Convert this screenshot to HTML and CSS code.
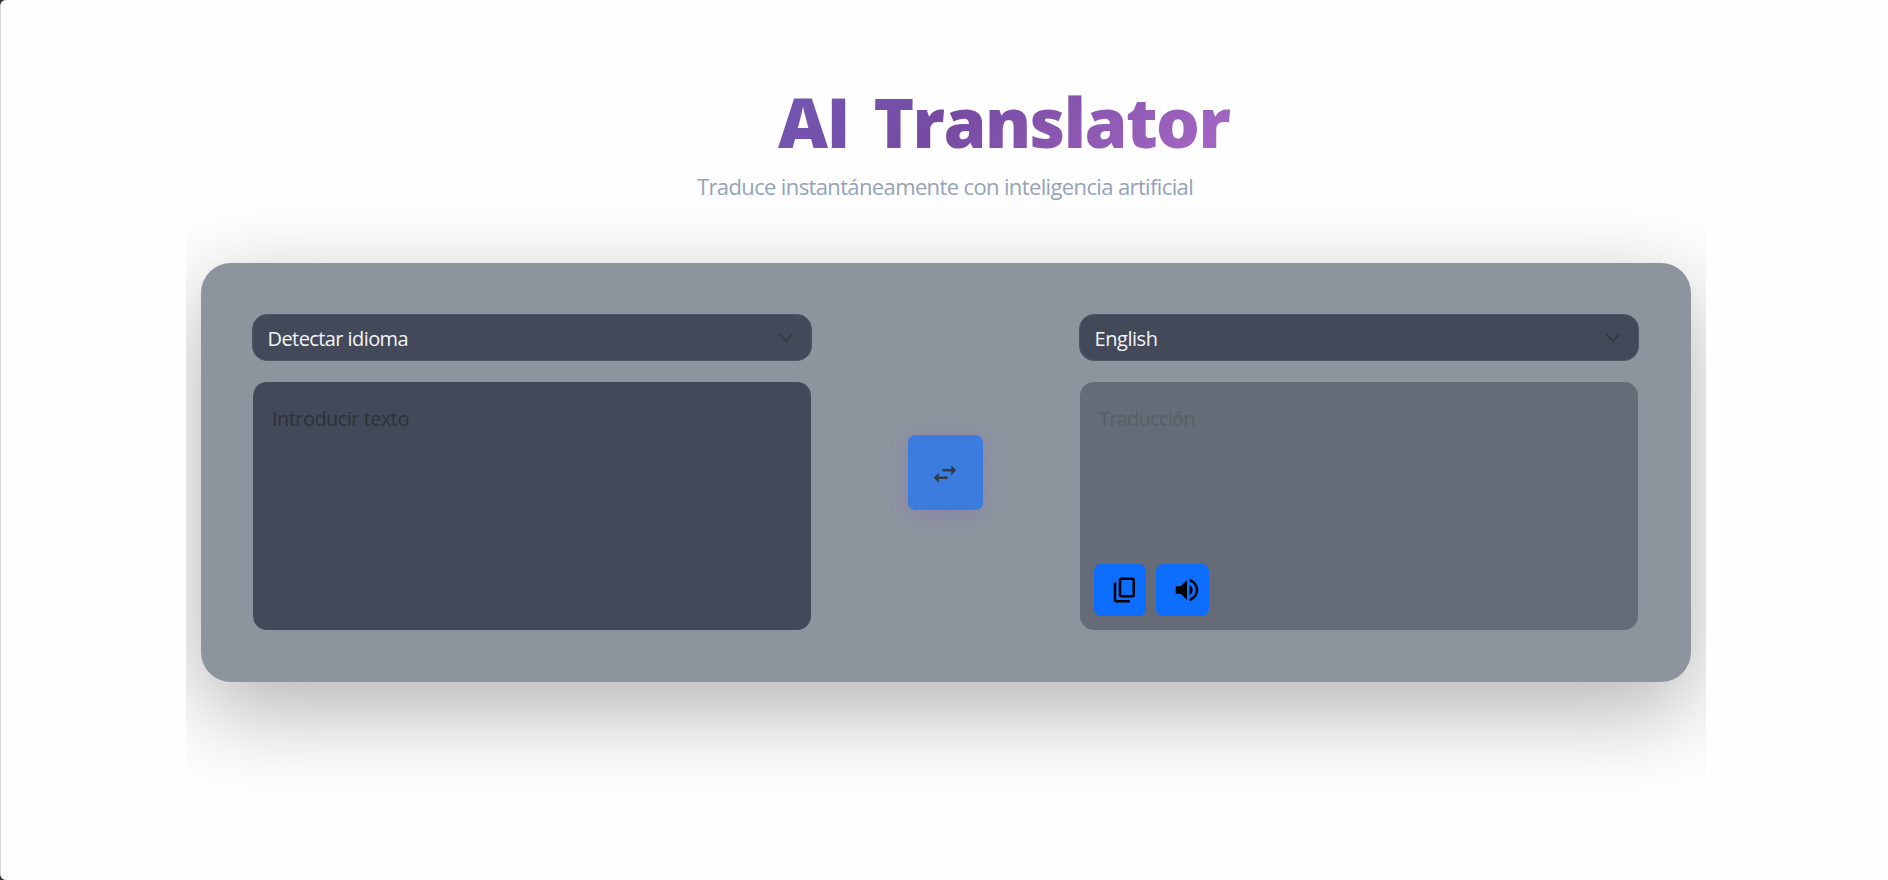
FILE: index.html
```html
<!DOCTYPE html>
<html lang="es">
<head>
<meta charset="utf-8">
<title>AI Translator</title>
<link rel="stylesheet" href="styles.css">
</head>
<body>
<main class="container">
  <header class="header">
    <h1 class="title">AI Translator</h1>
    <p class="subtitle">Traduce instantáneamente con inteligencia artificial</p>
  </header>
  <section class="card-wrap">
    <div class="card">
      <div class="panel">
        <div class="select"><span class="source-lang">Detectar idioma</span>
          <svg class="chevron" viewBox="0 0 16 16"><path d="m2 5 6 6 6-6"/></svg>
        </div>
        <div class="textarea"><span class="source-hint">Introducir texto</span></div>
      </div>
      <button class="swap" aria-label="Intercambiar">
        <svg viewBox="0 0 24 24"><path d="M6.990 11 3 15l3.990 4v-3H14v-2H6.990v-3zM21 9l-3.990-4v3H10v2h7.010v3L21 9z"/></svg>
      </button>
      <div class="panel">
        <div class="select"><span class="target-lang">English</span>
          <svg class="chevron" viewBox="0 0 16 16"><path d="m2 5 6 6 6-6"/></svg>
        </div>
        <div class="textarea output"><span class="target-hint">Traducción</span>
          <div class="actions">
            <button class="action" aria-label="Copiar"><svg viewBox="0 0 24 24"><path d="M9 18c-.55 0-1.020-.196-1.412-.587A1.926 1.926 0 0 1 7 16V4c0-.55.196-1.020.588-1.412A1.926 1.926 0 0 1 9 2h9c.55 0 1.020.196 1.413.588.391.391.587.862.587 1.412v12c0 .55-.196 1.020-.587 1.413A1.926 1.926 0 0 1 18 18H9zm0-2h9V4H9v12zm-4 6c-.55 0-1.020-.196-1.412-.587A1.926 1.926 0 0 1 3 20V6h2v14h11v2H5z"/></svg></button>
            <button class="action" aria-label="Escuchar"><svg viewBox="0 0 24 24"><path d="M3 9v6h4l5 5V4L7 9H3zm13.500 3A4.500 4.500 0 0 0 14 7.970v8.050A4.500 4.500 0 0 0 16.500 12zM14 3.230v2.060c2.890.86 5 3.540 5 6.710s-2.110 5.850-5 6.710v2.060c4.010-.91 7-4.490 7-8.770s-2.990-7.860-7-8.770z"/></svg></button>
          </div>
        </div>
      </div>
    </div>
  </section>
</main>
</body>
</html>
```
FILE: styles.css
```css
* { box-sizing: border-box; }
html { background: #333; }
body {
  margin: 0;
  height: 880px;
  overflow: hidden;
  background: #fefefe;
  border-left: 1px solid #d6d6d6;
  border-radius: 6px 0 0 6px;
  font-family: "Open Sans", "Noto Sans", sans-serif;
}
.container {
  width: 1520px;
  height: 880px;
  margin-left: 185px;
  overflow: hidden;
  display: flex;
  flex-direction: column;
}
.header {
  height: 263px;
  flex: none;
  padding: 73px 15px 0;
}
.title {
  margin: 0;
  padding-left: 577px;
  height: 97px;
  line-height: 96px;
  font-family: "Open Sans", sans-serif;
  font-size: 69px;
  font-weight: 800;
  letter-spacing: -1.550px;
  word-spacing: 8px;
  white-space: nowrap;
  color: transparent;
  background: linear-gradient(135deg, #667eea 0%, #764ba2 50%, #f093fb 100%);
  background-clip: text;
  -webkit-background-clip: text;
}
.subtitle {
  margin: 0 0 0 496px;
  height: 32px;
  line-height: 32px;
  font-size: 22px;
  letter-spacing: -.63px;
  color: #94a3b8;
  white-space: nowrap;
}
.card-wrap { padding: 0 15px; }
.card {
  height: 419px;
  padding: 51px 52px 51px 51px;
  border-radius: 30px;
  background: #8d949e;
  box-shadow: 0 28px 90px rgba(0, 0, 0, .3);
  display: flex;
  justify-content: space-between;
}
.panel { width: 560px; }
.select {
  height: 47px;
  margin-bottom: 21px;
  padding: 0 17px 0 14.500px;
  display: flex;
  align-items: center;
  justify-content: space-between;
  border: 1px solid #4d5565;
  border-radius: 15px;
  background: #444959;
  color: #f1f5f9;
  font-size: 20px;
  font-weight: 500;
  line-height: 45px;
}
.chevron {
  width: 16px;
  height: 16px;
  fill: none;
  stroke: #343a40;
  stroke-width: 2;
  stroke-linecap: round;
  stroke-linejoin: round;
}
.textarea {
  height: 248px;
  margin: 0 1px;
  padding: 23px 14px 14px 19px;
  display: flex;
  flex-direction: column;
  justify-content: space-between;
  border-radius: 14px;
  background: #444959;
  color: #2d3238;
  font-size: 20px;
  line-height: 28px;
}
.output { background: #666c77; color: #5a5e66; }
.actions { display: flex; gap: 10px; margin-left: -5px; }
.action {
  width: 52px;
  height: 52px;
  padding: 0 0 0 9px;
  display: flex;
  align-items: center;
  justify-content: center;
  border: 0;
  border-radius: 7px;
  background: #0d6efd;
}
.action svg { width: 30px; height: 30px; }
.action + .action { width: 53px; padding-left: 8px; }
.action + .action svg { width: 30px; height: 30px; }
.swap {
  width: 75px;
  height: 75px;
  margin: 121px 0 0;
  padding: 6px 2px 0 0;
  border: 0;
  border-radius: 7px;
  background: #3b7cde;
  box-shadow: 0 4px 20px rgba(118, 75, 222, .2);
}
.swap svg { width: 30px; height: 30px; fill: #343a40; }
.source-lang { position: relative; top: 1px; letter-spacing: -.58px; }
.target-lang { position: relative; top: 1px; letter-spacing: -.45px; }
.source-hint { letter-spacing: -.55px; }
.target-hint { letter-spacing: -.75px; }
```
